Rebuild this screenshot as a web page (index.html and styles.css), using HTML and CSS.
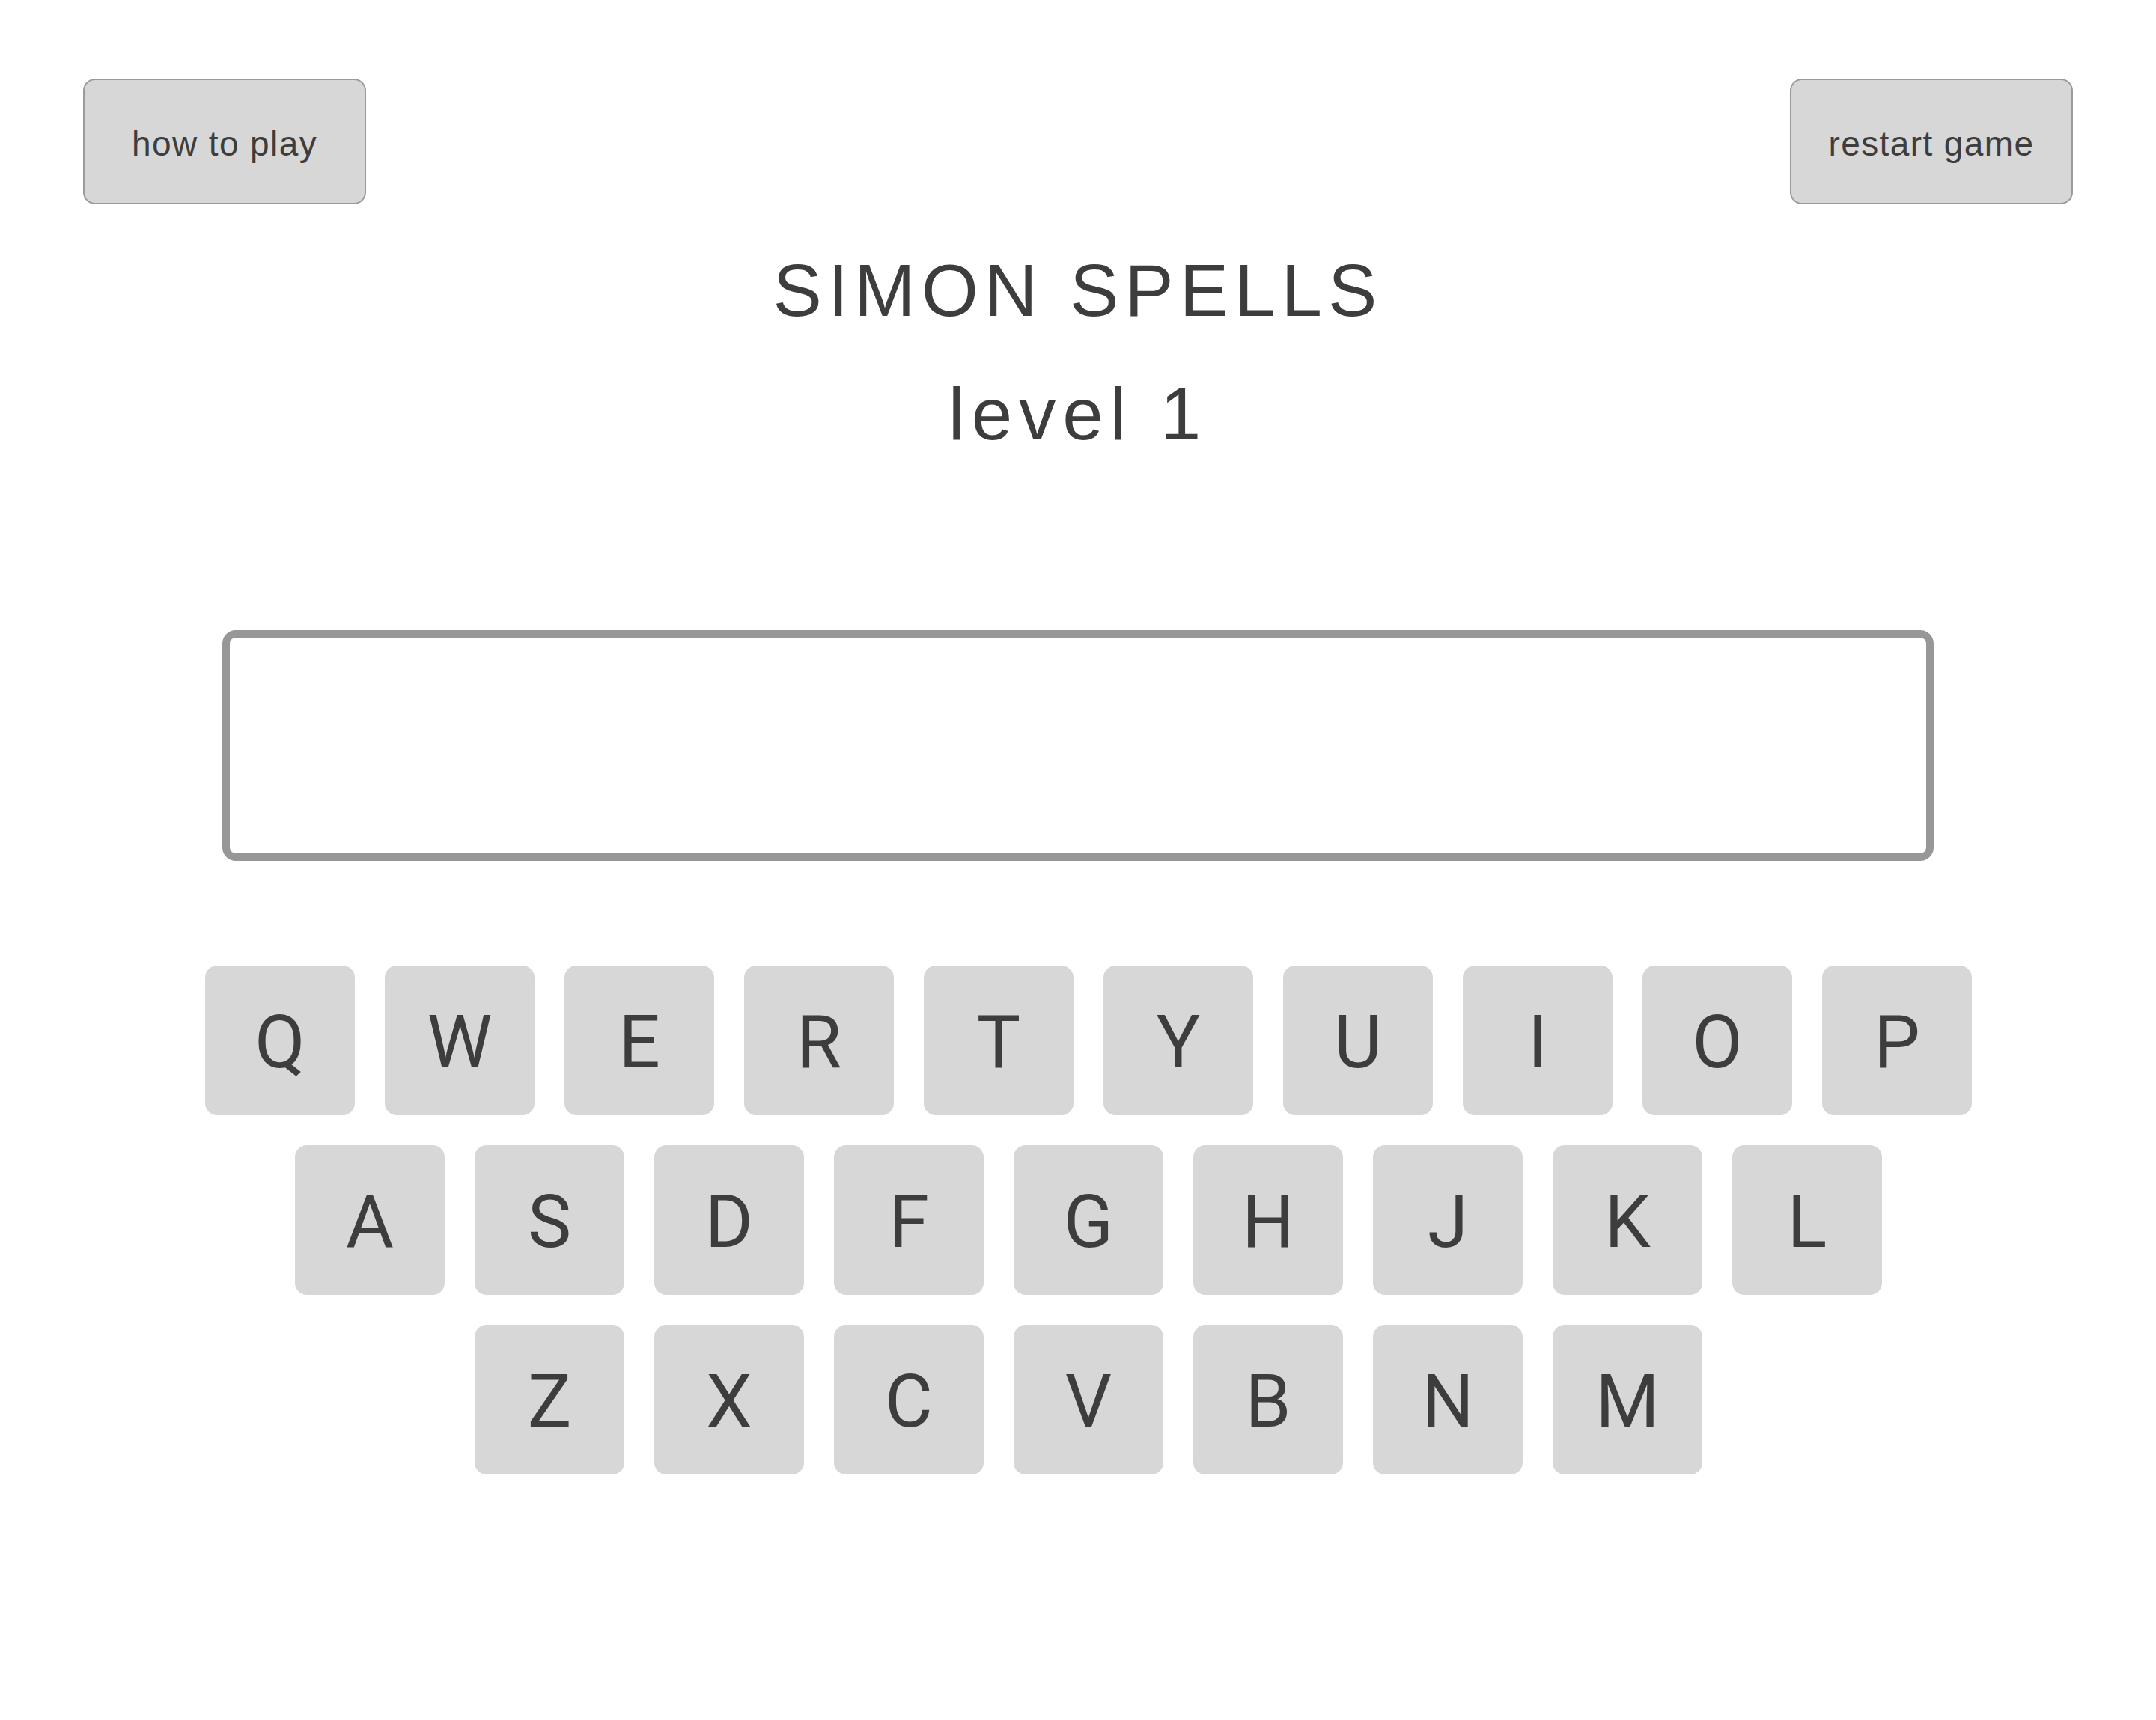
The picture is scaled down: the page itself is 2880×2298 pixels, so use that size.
FILE: index.html
```html
<!DOCTYPE html>
<html lang="en">
<head>
<meta charset="utf-8">
<title>Simon Spells</title>
<link rel="stylesheet" href="styles.css">
</head>
<body>
<header class="top-bar">
  <button class="btn">how to play</button>
  <button class="btn">restart game</button>
</header>
<h1 class="title">SIMON SPELLS</h1>
<h2 class="level">level 1</h2>
<div class="word-box"></div>
<div class="keyboard">
  <div class="row">
    <div class="key">Q</div><div class="key">W</div><div class="key">E</div><div class="key">R</div><div class="key">T</div><div class="key">Y</div><div class="key">U</div><div class="key">I</div><div class="key">O</div><div class="key">P</div>
  </div>
  <div class="row">
    <div class="key">A</div><div class="key">S</div><div class="key">D</div><div class="key">F</div><div class="key">G</div><div class="key">H</div><div class="key">J</div><div class="key">K</div><div class="key">L</div>
  </div>
  <div class="row">
    <div class="key">Z</div><div class="key">X</div><div class="key">C</div><div class="key">V</div><div class="key">B</div><div class="key">N</div><div class="key">M</div>
  </div>
</div>
</body>
</html>
```
FILE: styles.css
```css
* { box-sizing: border-box; }
html, body { margin: 0; padding: 0; background: #ffffff; }
body {
  font-family: "Liberation Sans", Arial, sans-serif;
  color: #3d3d3d;
  width: 2880px;
}
.top-bar {
  display: flex;
  justify-content: space-between;
  padding: 105px 111px 0;
}
.btn {
  width: 378px;
  height: 168px;
  background: #d7d7d7;
  border: 2px solid #9a9a9a;
  border-radius: 16px;
  font-family: "Liberation Sans", Arial, sans-serif;
  font-size: 46px;
  letter-spacing: 1.4px;
  color: #3d3d3d;
  display: flex;
  align-items: center;
  justify-content: center;
  padding: 6px 0 0;
}
.title {
  margin: 66px 0 0;
  font-size: 98px;
  line-height: 98px;
  font-weight: 400;
  letter-spacing: 8px;
  text-align: center;
}
.level {
  margin: 67px 0 0;
  font-size: 98px;
  line-height: 98px;
  font-weight: 400;
  letter-spacing: 9px;
  text-align: center;
}
.word-box {
  width: 2286px;
  height: 308px;
  margin: 240px auto 0;
  border: 10px solid #979797;
  border-radius: 18px;
  background: #ffffff;
}
.keyboard {
  margin-top: 140px;
  padding-left: 28px;
  display: flex;
  flex-direction: column;
  align-items: center;
  gap: 40px;
}
.row {
  display: flex;
  gap: 40px;
}
.key {
  width: 200px;
  height: 200px;
  border-radius: 16px;
  background: #d7d7d7;
  display: flex;
  align-items: center;
  justify-content: center;
  padding-top: 6px;
  font-family: Roboto, "Liberation Sans", sans-serif;
  font-size: 98px;
  line-height: 1;
  color: #3d3d3d;
}
```
